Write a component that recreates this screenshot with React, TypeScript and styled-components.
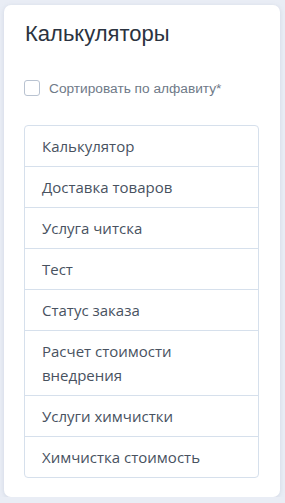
import React, { useState } from 'react'
import styled, { createGlobalStyle } from 'styled-components'

const Global = createGlobalStyle`
  body {
    margin: 0;
    background: #e9edf5;
    font-family: 'Liberation Sans', Arial, sans-serif;
  }
`

const Card = styled.div`
  width: 276px;
  box-sizing: border-box;
  margin: 5px 0 0 4px;
  padding: 14px 21px 19px 20px;
  background: #fff;
  border-radius: 7px;
  box-shadow: 0 1px 4px rgba(160, 172, 196, 0.35);
`

const Title = styled.h2`
  margin: 0 0 0 1px;
  font-family: 'Liberation Sans', Arial, sans-serif;
  font-weight: 400;
  font-size: 22px;
  line-height: 30px;
  color: #2b3340;
`

const SortRow = styled.label`
  display: flex;
  align-items: center;
  gap: 9px;
  margin-top: 31px;
  cursor: pointer;
`

const Box = styled.span<{ checked: boolean }>`
  width: 16px;
  height: 16px;
  box-sizing: border-box;
  border: 1px solid #b9c3d1;
  border-radius: 3px;
  background: ${(p) => (p.checked ? '#4a8bdc' : '#fff')};
  flex: none;
`

const SortText = styled.span`
  font-size: 13.7px;
  color: #6f7a88;
`

const List = styled.ul`
  list-style: none;
  margin: 29px 0 0;
  padding: 0;
  border: 1px solid #d6e0ec;
  border-radius: 4px;
`

const Item = styled.li`
  padding: 8px 17px;
  font-family: 'Open Sans', sans-serif;
  font-size: 15px;
  line-height: 24px;
  color: #48525f;
  border-bottom: 1px solid #d6e0ec;
  &:last-child {
    border-bottom: none;
  }
`

const calculators = [
  'Калькулятор',
  'Доставка товаров',
  'Услуга читска',
  'Тест',
  'Статус заказа',
  'Расчет стоимости внедрения',
  'Услуги химчистки',
  'Химчистка стоимость',
]

function App() {
  const [sorted, setSorted] = useState(false)
  return (
    <>
      <Global />
      <Card>
        <Title>Калькуляторы</Title>
        <SortRow onClick={() => setSorted(!sorted)}>
          <Box checked={sorted} />
          <SortText>Сортировать по алфавиту*</SortText>
        </SortRow>
        <List>
          {calculators.map((c) => (
            <Item key={c}>{c}</Item>
          ))}
        </List>
      </Card>
    </>
  )
}

export default App
